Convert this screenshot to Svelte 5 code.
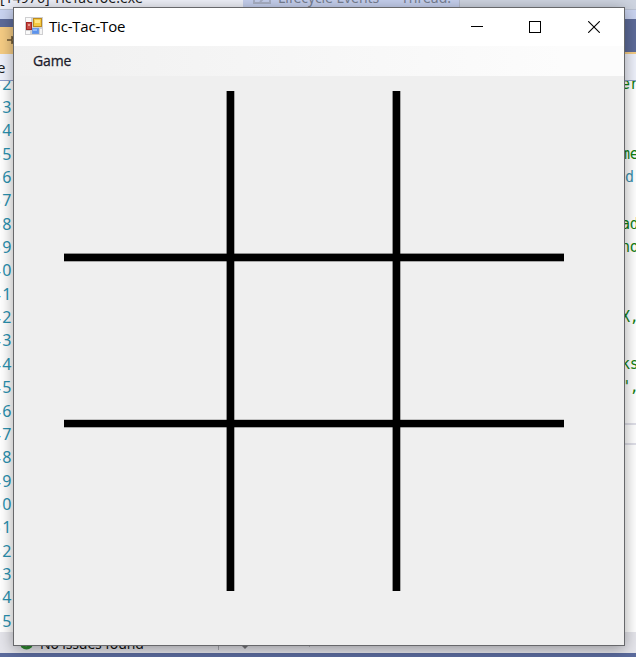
<script>
  const lines = Array.from({ length: 24 }, (_, i) => i + 32);
  const code = {
    32: 'er', 35: 'me', 36: 'd', 38: 'ad', 39: 'no', 42: 'X,', 44: 'ks', 45: '",'
  };
</script>

<div class="desktop">
  <div class="tabs">
    <div class="process"><span>[14976] TicTacToe.exe</span></div>
    <div class="events">
      <svg width="19" height="9" viewBox="0 0 19 9"><path d="M1 0V3H17V0M7 2L11 -2" fill="none" stroke="#a9b0c5" stroke-width="2" /></svg>
      <span class="life">Lifecycle Events</span><span class="thread">Thread:</span>
    </div>
    <div class="rest"></div>
  </div>
  <div class="strip"></div>
  <div class="well">
    <div class="doc"><svg width="8" height="12" viewBox="0 0 8 12"><path d="M0 6H5M5 2V10M5 4H8M5 8H8" fill="none" stroke="#6a5430" stroke-width="1.5" /></svg></div>
    <div class="welltail"></div>
  </div>
  <div class="nav"><span>e</span></div>
  <div class="editor">
    <div class="rows">
      {#each lines as n}
        <div class="row">
          <span class="num">{n}</span>
          <span class="code" class:type={n === 36}>{code[n] ?? ''}</span>
        </div>
      {/each}
    </div>
    <div class="current"></div>
  </div>
  <div class="health">
    <svg class="ok" width="15" height="15" viewBox="0 0 15 15"><circle cx="7.5" cy="7.5" r="7" fill="#2d8a30" /><path d="M4 7L7 10L11 5" fill="none" stroke="#e9f5e9" stroke-width="2" /></svg>
    <span class="issues">No issues found</span>
    <i class="sep"></i>
    <svg class="brush" width="10" height="8" viewBox="0 0 10 8"><path d="M1 0V3L5 7L9 3V0" fill="#77777c" /><path d="M4 1H6V3H4Z" fill="#ccc" /></svg>
    <i class="tick"></i>
  </div>
  <div class="status"></div>

  <section class="window">
    <header>
      <svg class="app" width="18" height="18" viewBox="0 0 18 18">
        <rect width="18" height="18" fill="#cfcfd1" />
        <rect x="1" y="1" width="5" height="4" fill="#fafafa" />
        <rect x="1" y="14" width="4" height="3" fill="#fafafa" />
        <rect x="15" y="12" width="2" height="5" fill="#f5f5f5" />
        <rect x="1.5" y="5.5" width="5" height="7" fill="#c84b45" stroke="#a32522" />
        <rect x="3" y="7" width="2" height="2" fill="#e99b91" />
        <rect x="8.5" y="1.5" width="8" height="8" fill="#f5ca42" stroke="#bd8b20" />
        <rect x="10" y="3" width="5" height="3" fill="#ffe486" />
        <rect x="7.5" y="11.5" width="6" height="5" fill="#5c93ed" stroke="#6d9ae4" />
        <rect x="8" y="12" width="4" height="2" fill="#94baf8" />
      </svg>
      <h1>Tic-Tac-Toe</h1>
      <div class="controls">
        <svg width="13" height="12" viewBox="0 0 13 12"><path d="M1 5.5H13" stroke="#000" /></svg>
        <svg width="12" height="12" viewBox="0 0 12 12"><rect x=".5" y=".5" width="11" height="11" fill="none" stroke="#000" /></svg>
        <svg width="12" height="12" viewBox="0 0 12 12"><path d="M.2 .2L11.8 11.8M11.8 .2L.2 11.8" stroke="#000" stroke-width="1.1" /></svg>
      </div>
    </header>
    <nav><span>Game</span></nav>
    <main>
      <svg width="502" height="502" viewBox="0 0 502 502">
        <g fill="#000">
          <rect x="163.6" y="1" width="7.7" height="500" /><rect x="329.6" y="1" width="7.7" height="500" />
          <rect x="1" y="163.6" width="500" height="7.7" /><rect x="1" y="329.8" width="500" height="7.5" />
        </g>
      </svg>
    </main>
  </section>
</div>

<style>
  .desktop {
    position: relative; width: 636px; height: 657px; overflow: hidden;
    display: flex; flex-direction: column; background: #fff; color: #1e1e1e;
    font-family: "Noto Sans", "Open Sans", sans-serif; font-size: 15px;
  }
  .tabs { display: flex; height: 9px; flex: none; overflow: hidden; font-size: 14px; line-height: 19px; }
  .tabs span { display: block; margin-top: -12px; white-space: nowrap; }
  .process { width: 243px; background: #eef0f8; }
  .process span { letter-spacing: .05px; }
  .events { width: 216px; display: flex; background: #c5cfed; color: #777f92; }
  .events svg { margin-left: 10px; flex: none; }
  .life { margin-left: 6px; letter-spacing: -.1px; }
  .thread { margin-left: 22px; }
  .rest { flex: 1; background: #ced4e0; border-left: 1px solid #b5bcce; }
  .strip { height: 10px; flex: none; background: #c9d3f0; border-top: 1px solid #b9c1d2; box-sizing: border-box; }
  .well { display: flex; height: 35px; flex: none; background: #5d6b99; }
  .doc { width: 20px; margin-top: 8px; background: #f5cc84; }
  .doc svg { display: block; margin: 7px 0 0 7px; }
  .welltail { flex: 1; border-bottom: 2px solid #f5cc84; }
  .nav { height: 27px; box-sizing: border-box; flex: none; background: #eef1fb; border-bottom: 1px solid #8c9ccb; line-height: 26px; }
  .nav span { margin-left: -3px; }
  .editor { height: 551px; flex: none; overflow: hidden; display: grid; }
  .rows { grid-area: 1 / 1; margin-top: -8.5px; }
  .row { height: 23.36px; display: flex; justify-content: space-between; line-height: 23.36px; font-size: 16px; }
  .num { width: 13px; display: flex; justify-content: flex-end; letter-spacing: 1.6px; color: #2b91af; }
  .code { width: 15px; color: #128012; font-family: "DejaVu Sans Mono", monospace; font-size: 15px; letter-spacing: -.3px; white-space: nowrap; }
  .code.type { width: 11px; color: #3d91ae; }
  .current { grid-area: 1 / 1; width: 30px; height: 18px; margin-top: 342px; justify-self: end; border: solid #dfdfe8; border-width: 2px 0; }
  .health { height: 21px; box-sizing: border-box; flex: none; display: flex; overflow: hidden; background: #e5e5eb; color: #111; }
  .ok { margin: 3px 0 0 19px; }
  .issues { margin-left: 6px; width: 100px; font-size: 14px; line-height: 20px; letter-spacing: -.15px; margin-top: 2px; white-space: nowrap; }
  .sep { width: 1px; margin-left: 78px; background: #aaaab0; height: 18px; }
  .brush { margin: 10px 0 0 21px; }
  .tick { width: 1px; height: 15px; margin-left: 59px; background: #b7b7bc; }
  .status { height: 4px; flex: none; background: #5b6b9d; }
  .window {
    position: absolute; left: 13px; top: 7px; width: 612px; height: 639px; box-sizing: border-box;
    display: flex; flex-direction: column; border: 1px solid #67686b; background: #efefef;
    box-shadow: 0 3px 14px rgba(0, 0, 0, .36);
  }
  header { display: flex; height: 38px; flex: none; background: #fff; }
  .app { margin: 9px 0 0 11px; }
  h1 { margin: 0 0 0 6px; font-family: "Open Sans", "Noto Sans", sans-serif; font-size: 15px; font-weight: 400; line-height: 37px; color: #000; letter-spacing: -.2px; white-space: nowrap; }
  .controls { display: flex; gap: 47px; margin: 13px 24px 0 auto; }
  .controls svg { display: block; }
  .controls svg:first-child { margin-right: -1px; }
  nav { height: 30px; flex: none; background: linear-gradient(90deg, #f0f0f0, #fcfcfc 90%); }
  nav span { display: block; margin-left: 19px; font-family: "Open Sans", sans-serif; font-size: 14px; letter-spacing: -.1px; line-height: 30px; color: #1c1c2c; -webkit-text-stroke: .3px #1c1c2c; }
  main { padding: 14px 0 0 49px; }
  main svg { display: block; }
  .status { height: 5px; }
</style>
